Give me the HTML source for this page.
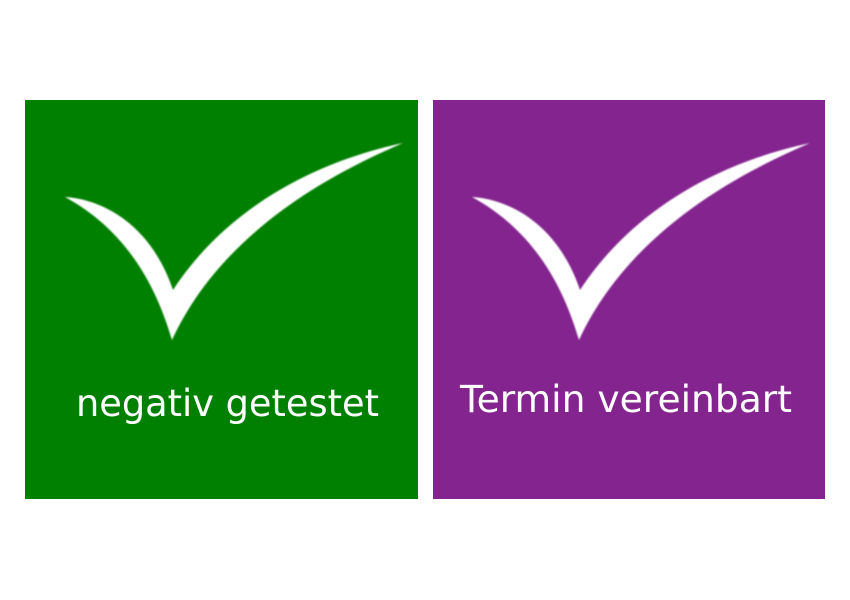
<!DOCTYPE html>
<html><head><meta charset="utf-8"><style>html,body{margin:0;padding:0;background:#fff;width:850px;height:600px;overflow:hidden}</style></head>
<body>
<svg width="850" height="600" viewBox="0 0 850 600" xmlns="http://www.w3.org/2000/svg">
<defs><filter id="b" x="-10%" y="-10%" width="120%" height="120%"><feGaussianBlur stdDeviation="0.9"/></filter></defs>
<rect x="25" y="100" width="393" height="399" fill="#008000"/>
<rect x="433" y="100" width="392" height="399" fill="#84248f"/>
<g id="c" fill="#fff" filter="url(#b)">
<path d="M65,197 C100,199 150,222 173,290 C220,218 300,165 403,143 C345,168 225,225 172,340 C160,300 135,235 65,197 Z"/>
</g>
<use href="#c" x="407" y="0"/>
<g fill="#fff" font-family="'DejaVu Sans','Liberation Sans',sans-serif" font-size="37">
<text x="76" y="416" textLength="303" lengthAdjust="spacingAndGlyphs">negativ getestet</text>
<text x="460" y="412" textLength="332" lengthAdjust="spacingAndGlyphs">Termin vereinbart</text>
</g>
</svg>
</body></html>
